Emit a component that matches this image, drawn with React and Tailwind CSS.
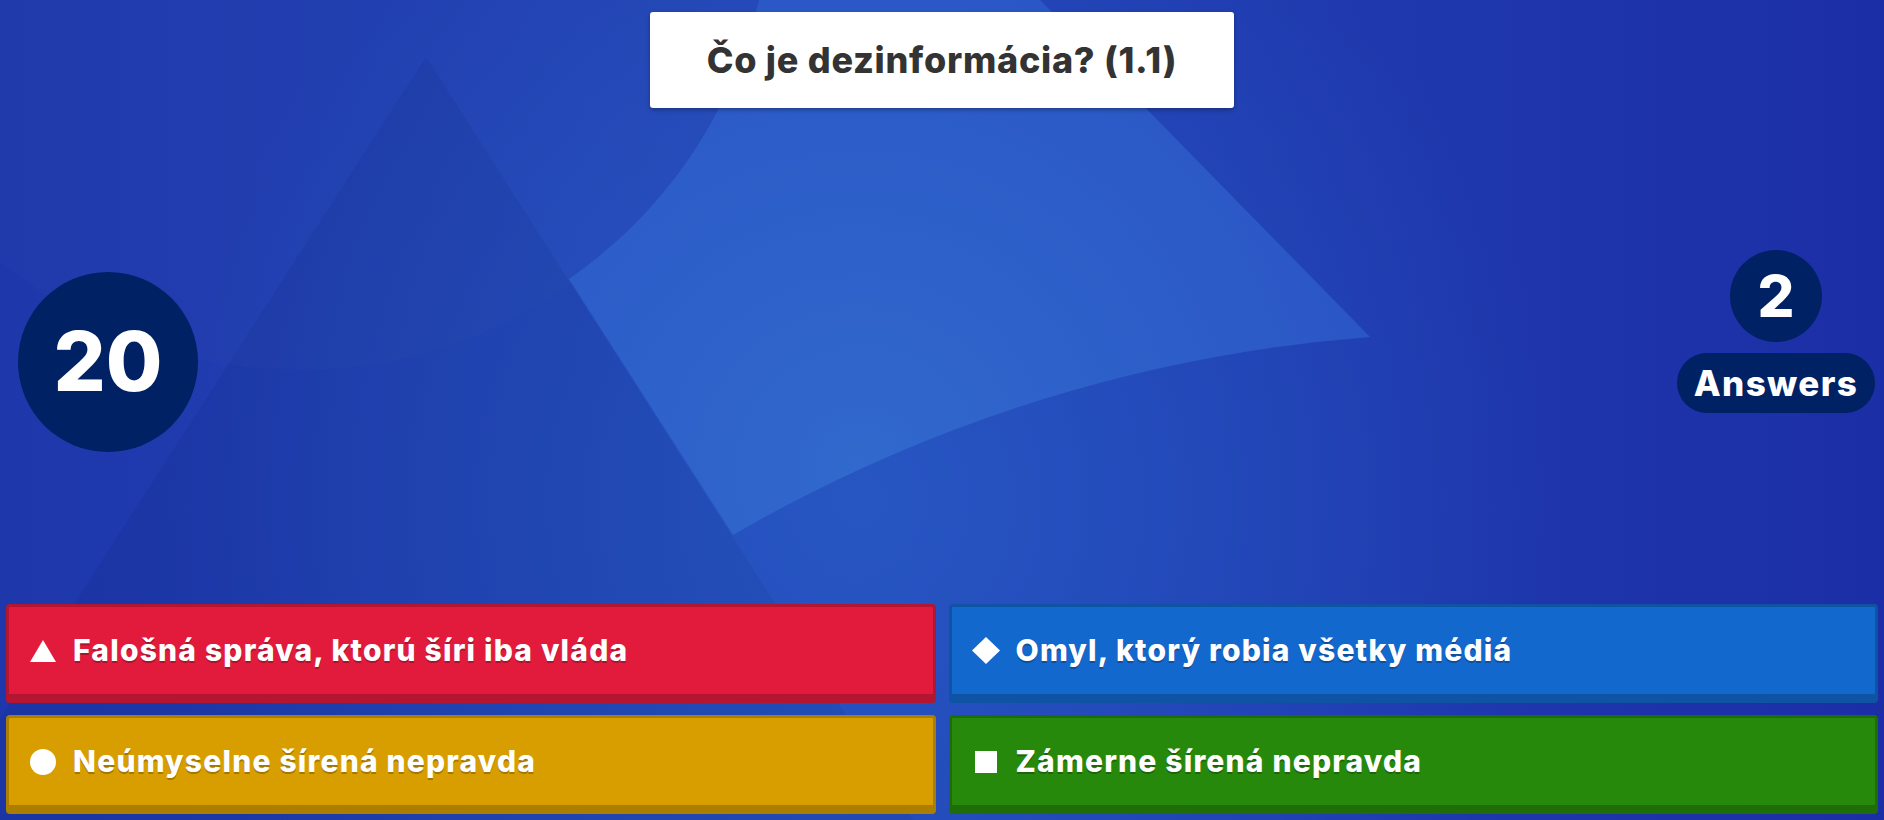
import React from 'react'

const answers = [
  { text: 'Falošná správa, ktorú šíri iba vláda', color: 'bg-[#e21b3c]', shape: 'triangle' },
  { text: 'Omyl, ktorý robia všetky médiá', color: 'bg-[#1368ce]', shape: 'diamond' },
  { text: 'Neúmyselne šírená nepravda', color: 'bg-[#d89e00]', shape: 'circle' },
  { text: 'Zámerne šírená nepravda', color: 'bg-[#26890c]', shape: 'square' },
]

function ShapeIcon({ shape }) {
  if (shape === 'triangle') {
    return (
      <svg width="26" height="22" viewBox="0 0 26 22">
        <polygon points="13,0 26,22 0,22" fill="#fff" />
      </svg>
    )
  }
  if (shape === 'diamond') {
    return (
      <svg width="28" height="27" viewBox="0 0 28 27">
        <polygon points="14,0 28,13.5 14,27 0,13.5" fill="#fff" />
      </svg>
    )
  }
  if (shape === 'circle') {
    return (
      <svg width="26" height="26" viewBox="0 0 26 26">
        <circle cx="13" cy="13" r="13" fill="#fff" />
      </svg>
    )
  }
  return (
    <svg width="22" height="22" viewBox="0 0 22 22">
      <rect x="0" y="0" width="22" height="22" fill="#fff" />
    </svg>
  )
}

// decorative background shapes
function Background() {
  return (
    <svg className="absolute inset-0 w-full h-full" viewBox="0 0 1884 820" preserveAspectRatio="none">
      <defs>
        <linearGradient id="base" x1="0" y1="0" x2="1" y2="0">
          <stop offset="0" stopColor="#1e38ac" />
          <stop offset="0.45" stopColor="#2243b5" />
          <stop offset="1" stopColor="#1c2ea6" />
        </linearGradient>
        <radialGradient id="glow" cx="860" cy="500" r="700" gradientUnits="userSpaceOnUse">
          <stop offset="0" stopColor="#2758c4" stopOpacity="0.9" />
          <stop offset="1" stopColor="#2758c4" stopOpacity="0" />
        </radialGradient>
        <radialGradient id="light" cx="860" cy="470" r="560" gradientUnits="userSpaceOnUse">
          <stop offset="0" stopColor="#3169cd" />
          <stop offset="1" stopColor="#2a55c5" />
        </radialGradient>
      </defs>
      <rect x="0" y="0" width="1884" height="820" fill="url(#base)" />
      <rect x="0" y="0" width="1884" height="820" fill="url(#glow)" />
      <circle cx="300" cy="-100" r="470" fill="#ffffff" opacity="0.012" />
      <path
        d="M759,0 L1040,0 L1370,337 A1495,1495 0 0 0 733,535 L569,279 A470,470 0 0 0 759,0 Z"
        fill="url(#light)"
      />
      <polygon points="426,57 913,820 -65,820" fill="#000a40" opacity="0.07" />
    </svg>
  )
}

export default function App() {
  return (
    <div
      className="relative w-full h-[820px] overflow-hidden"
      style={{ fontFamily: 'Inter, "Open Sans", "Noto Sans", sans-serif' }}
    >
      <Background />

      <div className="relative h-full flex flex-col">
        {/* Question title */}
        <div className="flex justify-center pt-[12px]">
          <div className="w-[584px] h-[96px] bg-white rounded-[3px] shadow-[0_2px_4px_rgba(0,0,0,0.3)] flex items-center justify-center">
            <h1 className="text-[36px] font-extrabold text-[#333333] tracking-[0.02em]">Čo je dezinformácia? (1.1)</h1>
          </div>
        </div>

        {/* Timer + answers counter */}
        <div className="flex justify-between items-start">
          <div className="ml-[18px] mt-[164px] w-[180px] h-[180px] rounded-full bg-[#002163] flex items-center justify-center">
            <span className="text-[82px] font-extrabold text-white leading-none">20</span>
          </div>
          <div className="mr-[9px] mt-[142px] w-[198px] flex flex-col items-center gap-[11px]">
            <div className="w-[92px] h-[92px] rounded-full bg-[#002163] flex items-center justify-center">
              <span className="text-[58px] font-extrabold text-white leading-none">2</span>
            </div>
            <div className="w-[198px] h-[60px] rounded-full bg-[#002163] flex items-center justify-center">
              <span className="text-[35px] font-extrabold text-white leading-none tracking-[0.04em]">Answers</span>
            </div>
          </div>
        </div>

        {/* Answer tiles */}
        <div className="mt-auto grid grid-cols-2 gap-x-[13px] gap-y-[12px] px-[6px] pb-[6px]">
          {answers.map(a => (
            <div
              key={a.text}
              className={`${a.color} h-[99px] rounded-[4px] border-[3px] border-b-[9px] border-black/20 flex items-center pl-[18px]`}
            >
              <div className="w-[32px] flex items-center justify-center">
                <ShapeIcon shape={a.shape} />
              </div>
              <span className="ml-[14px] text-[30px] font-extrabold text-white tracking-[0.04em] [text-shadow:0_2px_0_rgba(0,0,0,0.25)]">
                {a.text}
              </span>
            </div>
          ))}
        </div>
      </div>
    </div>
  )
}
